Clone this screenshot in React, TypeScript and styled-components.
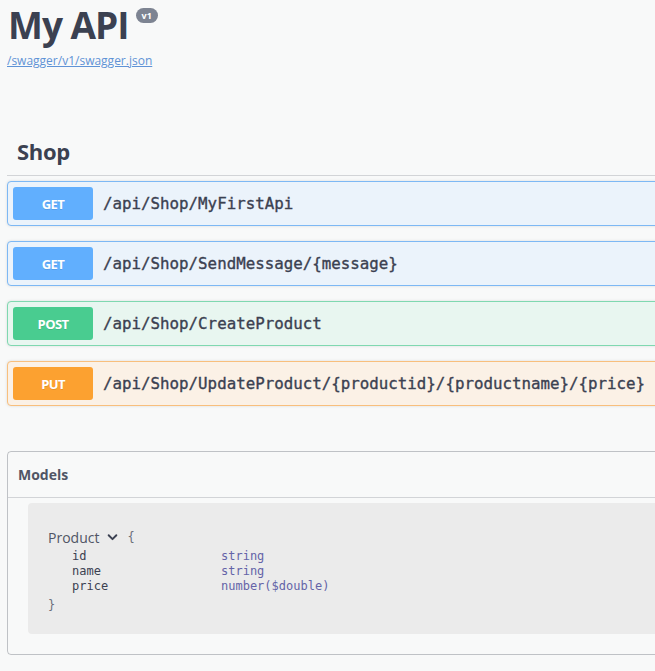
import React from "react";
import styled, { createGlobalStyle } from "styled-components";

const Global = createGlobalStyle`
  html, body { margin: 0; padding: 0; background: #f8f9f9; overflow: hidden; }
  body { font-family: "Open Sans", "DejaVu Sans", sans-serif; color: #3b4151; }
`;

const Page = styled.div`
  width: 780px;
  padding: 0 0 0 7px;
  box-sizing: border-box;
`;

const Info = styled.div`
  padding-top: 2px;
`;

const TitleRow = styled.div`
  display: flex;
  align-items: flex-start;
`;

const Title = styled.h1`
  margin: 0;
  padding-left: 1px;
  font-size: 37px;
  line-height: 46px;
  font-weight: 700;
  color: #3b4151;
  letter-spacing: -1px;
`;

const Version = styled.span`
  margin: 6px 0 0 7px;
  height: 15px;
  padding: 0 6px;
  border-radius: 8px;
  background: #7d8492;
  color: #fff;
  font-size: 9px;
  font-weight: 700;
  line-height: 15px;
`;

const SpecLink = styled.a`
  display: inline-block;
  margin-top: 3px;
  font-size: 12px;
  line-height: 16px;
  color: #5f93d6;
  text-decoration: underline;
`;

const Tag = styled.section`
  margin-top: 59px;
`;

const TagHeader = styled.h3`
  margin: 0;
  padding: 10px 0 12px 10px;
  font-size: 22px;
  line-height: 24px;
  font-weight: 700;
  color: #3b4151;
  border-bottom: 1px solid rgba(59, 65, 81, 0.2);
  letter-spacing: -0.3px;
`;

const OpList = styled.div`
  display: flex;
  flex-direction: column;
  gap: 15px;
  margin-top: 5px;
`;

type Method = "get" | "post" | "put";

const palette: Record<Method, { bg: string; border: string; badge: string }> = {
  get: { bg: "#ebf3fb", border: "#7db8f4", badge: "#61affe" },
  post: { bg: "#e8f6f0", border: "#7fd8b0", badge: "#49cc90" },
  put: { bg: "#fbf1e6", border: "#f8bf7d", badge: "#fca130" },
};

const Op = styled.div<{ $m: Method }>`
  display: flex;
  align-items: center;
  height: 45px;
  padding: 0 5px;
  box-sizing: border-box;
  border: 1px solid ${(p) => palette[p.$m].border};
  border-radius: 4px;
  background: ${(p) => palette[p.$m].bg};
  box-shadow: 0 0 3px rgba(0, 0, 0, 0.12);
`;

const Badge = styled.span<{ $m: Method }>`
  width: 80px;
  height: 33px;
  flex: none;
  display: flex;
  align-items: center;
  justify-content: center;
  border-radius: 3px;
  background: ${(p) => palette[p.$m].badge};
  color: #fff;
  font-size: 13px;
  font-weight: 700;
  letter-spacing: -0.6px;
  text-shadow: 0 1px 0 rgba(0, 0, 0, 0.1);
`;

const Path = styled.span`
  margin-left: 10px;
  font-family: "DejaVu Sans Mono", "Liberation Mono", monospace;
  font-size: 15.8px;
  font-weight: 400;
  -webkit-text-stroke: 0.35px #3b4151;
  color: #3b4151;
  white-space: nowrap;
`;

const Models = styled.section`
  margin-top: 45px;
  border: 1px solid rgba(59, 65, 81, 0.3);
  border-radius: 4px;
  height: 204px;
  box-sizing: border-box;
`;

const ModelsHeader = styled.h4`
  margin: 0;
  padding: 0 0 0 10px;
  height: 45px;
  display: flex;
  align-items: center;
  font-size: 14px;
  font-weight: 700;
  color: #505565;
  border-bottom: 1px solid rgba(59, 65, 81, 0.2);
`;

const ModelBox = styled.div`
  margin: 5px 0 0 20px;
  height: 131px;
  padding: 24px 0 0 20px;
  box-sizing: border-box;
  border-radius: 4px;
  background: #ebebeb;
`;

const ModelTitle = styled.div`
  display: flex;
  align-items: center;
  height: 20px;
  font-size: 14px;
  color: #505565;
`;

const Brace = styled.span`
  font-family: "DejaVu Sans Mono", monospace;
  font-size: 12px;
  color: #6b6f7a;
  margin-left: 9px;
`;

const Chevron = styled.svg`
  margin-left: 8px;
  width: 11px;
  height: 11px;
`;

const Props = styled.div`
  display: grid;
  grid-template-columns: 149px auto;
  margin: 2px 0 0 24px;
  font-family: "DejaVu Sans Mono", monospace;
  font-size: 12px;
  line-height: 15px;
`;

const PropName = styled.span`
  color: #3b4151;
`;

const PropType = styled.span`
  color: #6464a8;
`;

const ClosingBrace = styled.div`
  margin-top: 4px;
  font-family: "DejaVu Sans Mono", monospace;
  font-size: 12px;
  line-height: 15px;
  color: #6b6f7a;
`;

const ops: { m: Method; label: string; path: string }[] = [
  { m: "get", label: "GET", path: "/api/Shop/MyFirstApi" },
  { m: "get", label: "GET", path: "/api/Shop/SendMessage/{message}" },
  { m: "post", label: "POST", path: "/api/Shop/CreateProduct" },
  { m: "put", label: "PUT", path: "/api/Shop/UpdateProduct/{productid}/{productname}/{price}" },
];

const props = [
  ["id", "string"],
  ["name", "string"],
  ["price", "number($double)"],
];

export default function App() {
  return (
    <>
      <Global />
      <Page>
        <Info>
          <TitleRow>
            <Title>My API</Title>
            <Version>v1</Version>
          </TitleRow>
          <SpecLink href="#">/swagger/v1/swagger.json</SpecLink>
        </Info>
        <Tag>
          <TagHeader>Shop</TagHeader>
          <OpList>
            {ops.map((o) => (
              <Op key={o.path} $m={o.m}>
                <Badge $m={o.m}>{o.label}</Badge>
                <Path>{o.path}</Path>
              </Op>
            ))}
          </OpList>
        </Tag>
        <Models>
          <ModelsHeader>Models</ModelsHeader>
          <ModelBox>
            <ModelTitle>
              Product
              <Chevron viewBox="0 0 20 20">
                <path d="M3 6 L10 13 L17 6" fill="none" stroke="#3b4151" strokeWidth="3.5" strokeLinecap="round" strokeLinejoin="round" />
              </Chevron>
              <Brace>{"{"}</Brace>
            </ModelTitle>
            <Props>
              {props.map(([n, t]) => (
                <React.Fragment key={n}>
                  <PropName>{n}</PropName>
                  <PropType>{t}</PropType>
                </React.Fragment>
              ))}
            </Props>
            <ClosingBrace>{"}"}</ClosingBrace>
          </ModelBox>
        </Models>
      </Page>
    </>
  );
}
